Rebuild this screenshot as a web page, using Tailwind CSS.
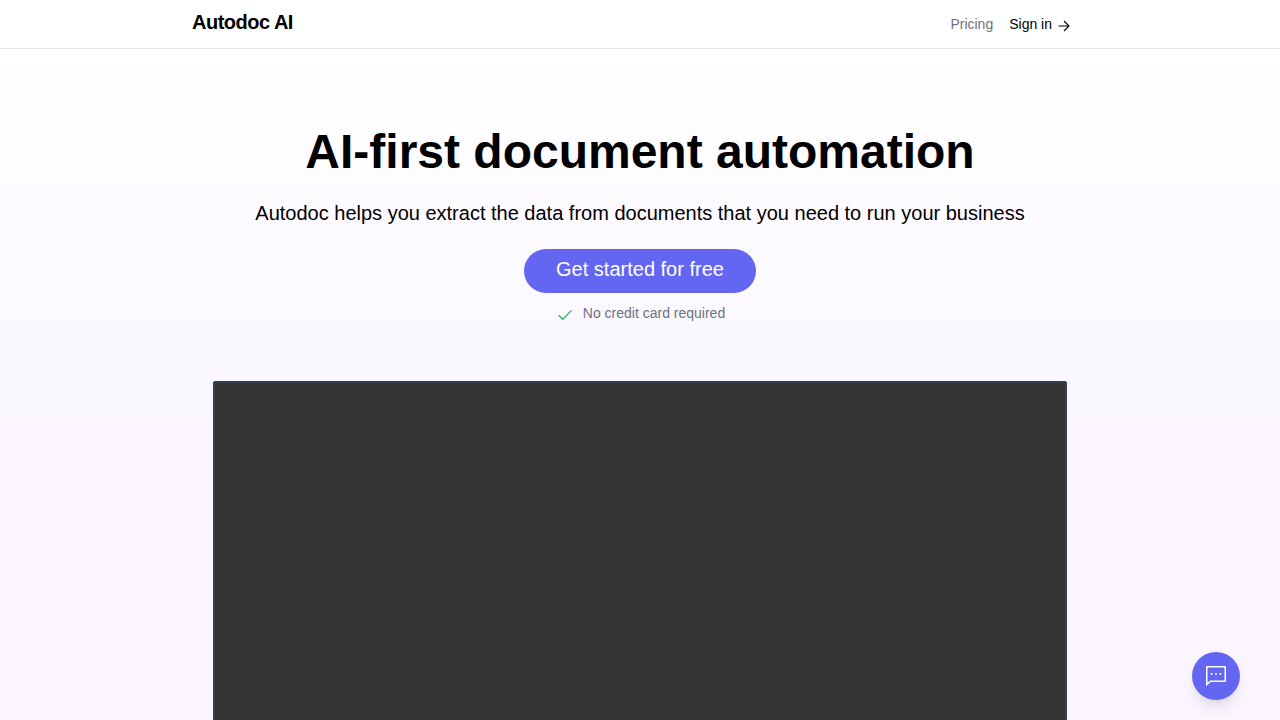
<!DOCTYPE html>
<html lang="en">
<head>
<meta charset="utf-8">
<meta name="viewport" content="width=device-width, initial-scale=1">
<title>Autodoc AI</title>
<script src="https://cdn.jsdelivr.net/npm/@tailwindcss/browser@4"></script>
</head>
<body class="min-h-screen overflow-x-hidden bg-white font-['Liberation_Sans',Arial,sans-serif] text-black">
<header class="border-b border-[#e5e7eb] bg-white">
  <div class="mx-auto flex h-12 max-w-4xl items-center justify-between pr-4">
    <a href="#" class="pb-1 text-xl font-bold tracking-tight">Autodoc AI</a>
    <nav class="flex items-center gap-4 text-sm">
      <a href="#" class="text-[#6b7280]">Pricing</a>
      <a href="#" class="flex items-center gap-1">Sign in
        <svg class="mt-1 size-4" viewBox="0 0 16 16" fill="none" stroke="currentColor" stroke-width="1.1" aria-hidden="true"><path d="M2.500 8h10.500M8 3l5 5-5 5"/></svg>
      </a>
    </nav>
  </div>
</header>
<main class="bg-linear-to-b from-white to-[#faf5ff] to-[400px] px-4 pt-19">
  <div class="mx-auto flex max-w-4xl flex-col items-center text-center">
    <h1 class="text-5xl leading-[54px] font-bold">AI-first document automation</h1>
    <p class="mt-5 text-xl">Autodoc helps you extract the data from documents that you need to run your business</p>
    <button type="button" class="mt-[22px] h-11 rounded-full bg-[#6366f1] px-8 pb-1 text-xl text-white">Get started for free</button>
    <p class="mt-2 flex items-center gap-2 text-sm text-[#6b7280]">
      <svg class="mt-1 size-5" viewBox="0 0 20 20" fill="none" stroke="#22b866" stroke-width="1.3" aria-hidden="true"><path d="M3.700 10.300l4.100 4 8.700-8.900"/></svg>
      No credit card required
    </p>
    <div class="mt-14 aspect-video w-full max-w-[854px] rounded-xs border-2 border-[#2f404f] bg-[#333333]"></div>
  </div>
</main>
<button type="button" aria-label="Open chat" class="fixed right-10 bottom-5 flex size-12 items-center justify-center rounded-full bg-[#6366f1] text-white shadow-lg">
  <svg class="size-6" viewBox="0 0 24 24" fill="none" stroke="currentColor" stroke-width="1.5" aria-hidden="true"><path d="M2.750 2.750h18.500v14.500H6.500l-3.750 3.250z"/><path fill="currentColor" stroke="none" d="M6.750 9h1.700v1.700h-1.700zM11.150 9h1.700v1.700h-1.700zM15.550 9h1.700v1.700h-1.700z"/></svg>
</button>
</body>
</html>
